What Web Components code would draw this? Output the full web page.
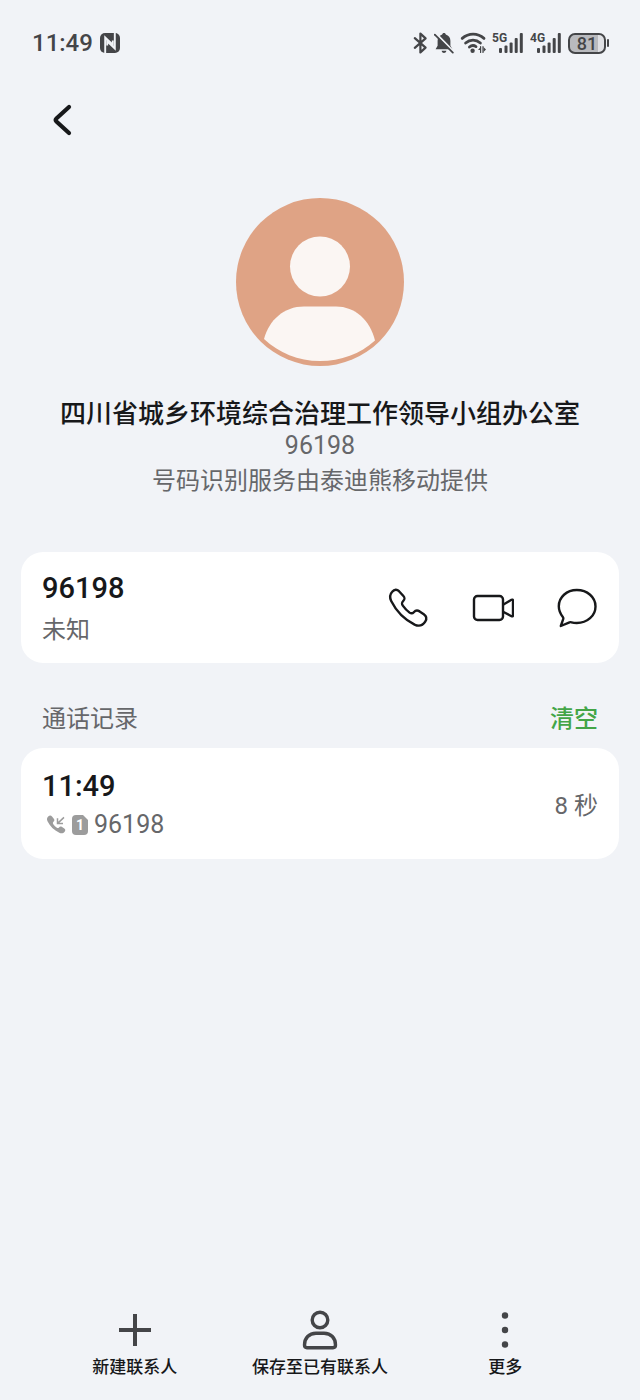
<!DOCTYPE html>
<html lang="zh-CN">
<head>
<meta charset="utf-8">
<meta name="viewport" content="width=device-width, initial-scale=1">
<title>联系人详情</title>
<style>
  html, body { margin: 0; padding: 0; }
  body {
    --bg: #f1f3f7;
    --ink: #17181a;
    --muted: #66676a;
    --icon: #444548;
    --accent: #43a547;
    --num: Roboto, "Noto Sans CJK SC", sans-serif;
    --han: "Noto Sans CJK SC", sans-serif;
    background: var(--bg);
    color: var(--ink);
    font-family: var(--han);
  }
</style>
</head>
<body>
<contact-page>
  <status-bar slot="status" time="11:49" battery="81"></status-bar>
  <nav-bar slot="nav"></nav-bar>
  <contact-hero number="96198">
    <span slot="name">四川省城乡环境综合治理工作领导小组办公室</span>
    <span slot="source">号码识别服务由泰迪熊移动提供</span>
  </contact-hero>
  <number-card number="96198">未知</number-card>
  <call-log>
    <call-entry time="11:49" number="96198" sim="1">8 秒</call-entry>
  </call-log>
  <action-bar slot="actions">
    <action-item icon="plus">新建联系人</action-item>
    <action-item icon="person">保存至已有联系人</action-item>
    <action-item icon="more">更多</action-item>
  </action-bar>
</contact-page>

<script>
const BUTTON = `
  button { appearance: none; border: 0; margin: 0; padding: 0; background: none;
    color: inherit; font: inherit; cursor: pointer; }
  svg { display: block; }
`;

class Base extends HTMLElement {
  connectedCallback() {
    if (this.shadowRoot) return;
    this.attachShadow({ mode: 'open' }).innerHTML = this.render();
  }
  attr(name) { return this.getAttribute(name) || ''; }
}

customElements.define('contact-page', class extends Base {
  render() {
    return `<style>
      :host { display: flex; flex-direction: column; min-height: 100vh; }
      main { padding: 0 21px; }
      footer { margin-top: auto; }
    </style>
    <slot name="status"></slot>
    <slot name="nav"></slot>
    <main><slot></slot></main>
    <footer><slot name="actions"></slot></footer>`;
  }
});

customElements.define('signal-meter', class extends Base {
  render() {
    return `<style>:host { display: block; } svg { display: block; }
      text { font: 700 12px Roboto, sans-serif; }</style>
    <svg width="32" height="24" viewBox="0 0 32 24" fill="currentColor">
      <text x="0" y="11">${this.attr('label')}</text>
      <rect x="7" y="17" width="3" height="5" rx="1"/>
      <rect x="12.5" y="14.5" width="3" height="7.5" rx="1"/>
      <rect x="17.6" y="11.5" width="3" height="10.5" rx="1"/>
      <rect x="22.7" y="7" width="3" height="15" rx="1"/>
      <rect x="27.8" y="2" width="3" height="20" rx="1"/>
    </svg>`;
  }
});

customElements.define('status-bar', class extends Base {
  render() {
    return `<style>
      :host { display: flex; justify-content: space-between; align-items: center;
        height: 86px; padding: 0 31px 0 32px; color: var(--icon); font-family: var(--num); }
      div { display: flex; align-items: center; gap: 6px; }
      time { font-size: 24px; line-height: 28px; font-weight: 500; }
      svg { display: block; }
      .battery { display: flex; align-items: center; gap: 1px; }
      .cell { box-sizing: border-box; width: 38px; height: 21px; border: 2px solid;
        border-radius: 7px; text-align: center; font-size: 18px; line-height: 18px; font-weight: 500;
        background: linear-gradient(90deg, #b9babe 81%, #dfe0e4 81%); }
      .tip { width: 2px; height: 8px; border-radius: 1px; background: currentColor; }
    </style>
    <div>
      <time>${this.attr('time')}</time>
      <svg width="22" height="22" viewBox="0 0 22 22" aria-label="NFC">
        <rect x="1" y="1" width="20" height="20" rx="5" fill="currentColor"/>
        <path d="M6.200 21V5.500L13.800 12.800V8.500" fill="none" stroke="#f1f3f7" stroke-width="1.900"/>
        <path d="M15.800 1V16.500L8.200 9.200V13.500" fill="none" stroke="#f1f3f7" stroke-width="1.900"/>
      </svg>
    </div>
    <div>
      <svg width="15" height="24" viewBox="0 0 15 24" fill="none" stroke="currentColor" stroke-width="2.200" stroke-linejoin="round" stroke-linecap="round" aria-label="蓝牙">
        <path d="M1.800 7.200L12.600 16.600L7.400 21.400V2.600L12.600 7.400L1.800 16.800"/>
      </svg>
      <svg width="20" height="24" viewBox="0 0 20 24" aria-label="静音">
        <path d="M10 2c1 0 1.700.6 1.800 1.600 2.800.8 4.600 3.200 4.600 6.200v5l2 3.400H1.600l2-3.400v-5c0-3 1.800-5.400 4.600-6.200C8.300 2.600 9 2 10 2zM7.600 19.800h4.800c-.4 1.500-1.200 2.200-2.400 2.200s-2-.7-2.400-2.200z" fill="currentColor"/>
        <path d="M2 2.500L20 21" stroke="#f1f3f7" stroke-width="2"/>
        <path d="M.8 3.600L18.800 21.600" stroke="currentColor" stroke-width="1.800" stroke-linecap="round"/>
      </svg>
      <svg width="26" height="24" viewBox="0 0 26 24" fill="none" stroke="currentColor" stroke-width="2.800" stroke-linecap="round" aria-label="无线网络">
        <path d="M2.200 7.400C8.600 1.700 17.600 1.700 24 7.400M5.600 12C10 8.200 16 8.200 20.400 12M9.400 16C11.600 14.200 14 14.200 16 15.600"/>
        <circle cx="12.600" cy="19.800" r="2.200" fill="currentColor" stroke="none"/>
        <path d="M20.600 15.500v6M23 15.500v6" stroke-width="1.200"/>
        <path d="M20.600 16l-2.600 3h2.600zM23.500 16l2.500 2.500-2.500 2.500z" fill="currentColor" stroke="none"/>
      </svg>
      <signal-meter label="5G"></signal-meter>
      <signal-meter label="4G"></signal-meter>
      <span class="battery"><span class="cell">${this.attr('battery')}</span><span class="tip"></span></span>
    </div>`;
  }
});

customElements.define('nav-bar', class extends Base {
  render() {
    return `<style>${BUTTON}
      :host { display: flex; align-items: center; height: 68px; padding: 0 42px; }
    </style>
    <button type="button" aria-label="返回">
      <svg width="40" height="40" viewBox="0 0 40 40" fill="none" stroke="#17181a" stroke-width="4.200" stroke-linecap="round" stroke-linejoin="round">
        <path d="M27 7L14.400 18.500Q12.800 20 14.400 21.500L27 33"/>
      </svg>
    </button>`;
  }
});

customElements.define('contact-hero', class extends Base {
  render() {
    return `<style>
      :host { display: flex; flex-direction: column; align-items: center; text-align: center;
        padding: 44px 0 57px; }
      svg { display: block; margin-bottom: 29px; }
      h1, p { margin: 0; white-space: nowrap; }
      h1 { font-size: 26px; font-weight: 500; line-height: 34px; height: 34px; }
      p { font-size: 24px; color: var(--muted); line-height: 32px; height: 32px; }
      .number { font-family: var(--num); font-size: 25px; line-height: 34px; height: 34px; }
    </style>
    <svg width="168" height="168" viewBox="0 0 168 168" aria-hidden="true">
      <circle cx="84" cy="84" r="84" fill="#dfa385"/>
      <circle cx="84" cy="68.500" r="30" fill="#fbf6f3"/>
      <path d="M68 108.500H100C119 108.500 134 122 139 142.500C124 156 105 163 84 163C62 163 43 155 28 141C33 122 48 108.500 68 108.500Z" fill="#fbf6f3"/>
    </svg>
    <h1><slot name="name"></slot></h1>
    <p class="number">${this.attr('number')}</p>
    <p><slot name="source"></slot></p>`;
  }
});

customElements.define('number-card', class extends Base {
  render() {
    return `<style>${BUTTON}
      :host { display: flex; justify-content: space-between; align-items: center;
        padding: 15px 21px 15px 21px; background: #fff; border-radius: 22px; }
      .info { display: grid; gap: 1px; }
      .number, .label { height: 40px; line-height: 40px; }
      .number { font-family: var(--num); font-size: 29px; font-weight: 500; line-height: 42px; }
      .label { font-size: 24px; color: var(--muted); }
      .tools { display: flex; gap: 40px; }
      svg { fill: none; stroke: #17181a; stroke-width: 2.400; stroke-linejoin: round; stroke-linecap: round; }
    </style>
    <div class="info">
      <span class="number">${this.attr('number')}</span>
      <span class="label"><slot></slot></span>
    </div>
    <div class="tools">
      <button type="button" aria-label="拨打电话"><svg width="44" height="44" viewBox="0 0 44 44">
        <path d="M6.200 5.800C8.400 3.200 11 3.200 13 5.200L17.200 9.800C19.200 12 19 13 17.200 15C15.600 16.800 15.400 17.600 16.800 19.600C18.600 22.200 21 24.600 23.600 26.600C25.400 27.900 26.400 27.800 27.800 26.200C29.600 24.200 31.600 24.200 33.600 25.400L37.800 28.200C40.600 30.200 41 32.800 39.200 35.600C36.800 39.400 33 40.600 28.600 38.600C18.600 33.600 10.400 25.400 5.200 15C3.400 11.200 3.600 8.600 6.200 5.800Z"/>
      </svg></button>
      <button type="button" aria-label="视频通话"><svg width="44" height="44" viewBox="0 0 44 44">
        <rect x="4" y="10" width="29" height="24" rx="3.500"/>
        <path d="M33.500 18.500L41.500 13.800C42.300 13.400 43 13.700 43 14.500V29.500C43 30.300 42.300 30.600 41.500 30.200L33.500 26"/>
      </svg></button>
      <button type="button" aria-label="发送信息"><svg width="44" height="44" viewBox="0 0 44 44">
        <path d="M22.800 4C12.700 4 4.800 11.200 4.800 20.300C4.800 24.900 6.500 28.200 9 31.200C9.500 31.800 9.500 32.400 9.200 33.200L6.800 40L15.500 36.300C16.300 36 16.800 36.100 17.500 36.300C19.100 36.800 20.900 37 22.800 37C33.300 37 41.500 29.700 41.500 20.400C41.500 11.200 33.300 4 22.800 4Z"/>
      </svg></button>
    </div>`;
  }
});

customElements.define('call-log', class extends Base {
  render() {
    return `<style>${BUTTON}
      :host { display: block; padding-top: 33px; }
      header { display: flex; justify-content: space-between; align-items: center;
        padding: 0 21px 10px; }
      h2, button { margin: 0; font-size: 24px; line-height: 42px; height: 42px; }
      h2 { font-weight: 400; color: var(--muted); }
      button { color: var(--accent); font-weight: 500; }
    </style>
    <header><h2>通话记录</h2><button type="button">清空</button></header>
    <slot></slot>`;
  }
});

customElements.define('call-entry', class extends Base {
  render() {
    return `<style>
      :host { display: flex; justify-content: space-between; align-items: center;
        padding: 19px 21px 15px; background: #fff; border-radius: 22px; font-family: var(--num); }
      .info { display: grid; gap: 1px; }
      time, .line { height: 38px; line-height: 38px; }
      time { font-size: 29px; font-weight: 500; }
      .line { display: flex; align-items: center; gap: 6px; padding-left: 4px; color: var(--muted); font-size: 25px; }
      .length { font-size: 24px; line-height: 38px; height: 38px; color: var(--muted); }
      svg { display: block; }
      text { font: 700 14px Roboto, sans-serif; }
    </style>
    <div class="info">
      <time>${this.attr('time')}</time>
      <div class="line">
        <svg width="20" height="20" viewBox="0 0 20 20" aria-label="来电">
          <path d="M2.200 1.600C3.500.2 5 .3 6 1.500L8 4.100C8.900 5.400 8.200 6.100 7.300 7.100C6.700 7.800 6.800 8.400 7.300 9.200C8.300 10.700 9.500 11.800 10.900 12.700C11.700 13.200 12.400 13.100 13 12.400C13.800 11.500 14.600 11.100 15.700 11.800L18.300 13.400C19.600 14.300 19.500 15.600 18.600 16.700C17.300 18.400 15.300 18.600 13.300 17.700C8 15.400 4 11.400 1.500 6.300C.6 4.400.9 2.900 2.200 1.600Z" fill="#9c9c9c"/>
          <path d="M18 2.400L11.600 8.400M11.500 3.200V8.400H17" fill="none" stroke="#9c9c9c" stroke-width="1.500"/>
        </svg>
        <svg width="16" height="20" viewBox="0 0 16 20" aria-label="卡">
          <path d="M4 0H11L16 5V16Q16 20 12 20H4Q0 20 0 16V4Q0 0 4 0Z" fill="#9c9c9c"/>
          <text x="8" y="15" text-anchor="middle" fill="#fff">${this.attr('sim')}</text>
        </svg>
        <span>${this.attr('number')}</span>
      </div>
    </div>
    <span class="length"><slot></slot></span>`;
  }
});

customElements.define('action-bar', class extends Base {
  render() {
    return `<style>
      :host { display: grid; grid-template-columns: repeat(3, 1fr); padding: 0 42px 22px; }
    </style><slot></slot>`;
  }
});

const ACTION_ICONS = {
  plus: '<path d="M22 6V38M6 22H38" stroke-width="4"/>',
  person: '<circle cx="22" cy="12" r="7.800" stroke-width="3.400"/><path d="M18 25.200H26C33 25.200 37.500 30 37.500 37C37.500 39 36.700 39.700 35 39.700H9C7.300 39.700 6.500 39 6.500 37C6.500 30 11 25.200 18 25.200Z" stroke-width="3.400"/>',
  more: '<g fill="currentColor" stroke="none"><circle cx="22" cy="7.500" r="3.200"/><circle cx="22" cy="22" r="3.200"/><circle cx="22" cy="36.500" r="3.200"/></g>'
};

customElements.define('action-item', class extends Base {
  render() {
    return `<style>${BUTTON}
      :host { display: flex; justify-content: center; }
      button { display: grid; justify-items: center; gap: 2px; font-size: 17px; font-weight: 500;
        line-height: 24px; white-space: nowrap; }
      svg { color: var(--icon); }
    </style>
    <button type="button">
      <svg width="44" height="44" viewBox="0 0 44 44" fill="none" stroke="currentColor" aria-hidden="true">${ACTION_ICONS[this.attr('icon')]}</svg>
      <span><slot></slot></span>
    </button>`;
  }
});
</script>
</body>
</html>
